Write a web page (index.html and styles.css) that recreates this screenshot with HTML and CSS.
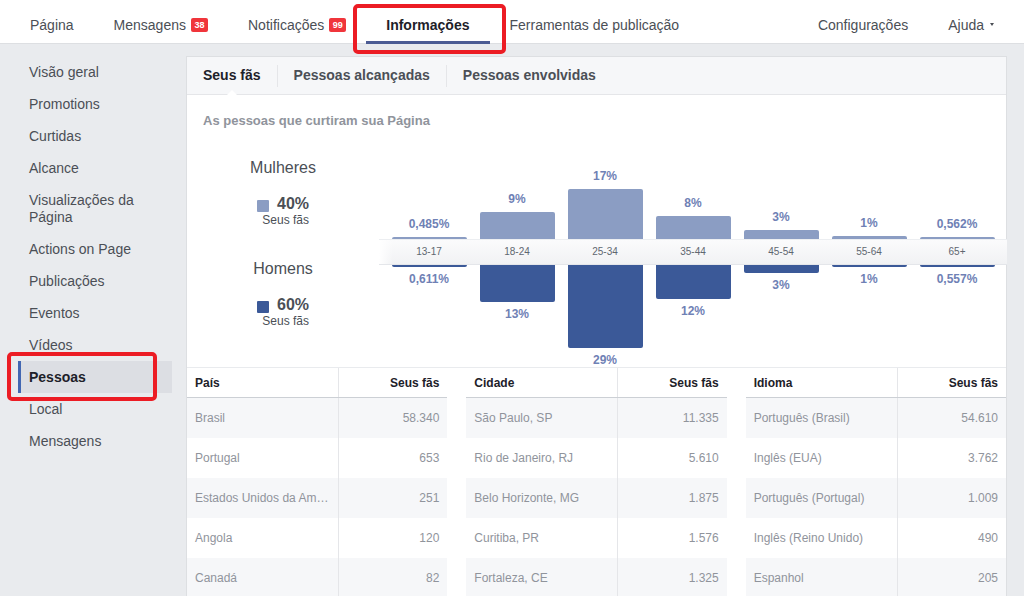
FILE: index.html
```html
<!DOCTYPE html>
<html lang="pt-BR">
<head>
<meta charset="utf-8">
<title>Informações – Pessoas</title>
<link rel="stylesheet" href="styles.css">
</head>
<body>
<header class="topnav">
  <nav class="nav-group">
    <a class="nav-item">Página</a>
    <a class="nav-item">Mensagens<span class="badge">38</span></a>
    <a class="nav-item">Notificações<span class="badge">99</span></a>
    <a class="nav-item active">Informações</a>
    <a class="nav-item">Ferramentas de publicação</a>
  </nav>
  <nav class="nav-group">
    <a class="nav-item">Configurações</a>
    <a class="nav-item">Ajuda<span class="caret"></span></a>
  </nav>
  <div class="annot annot-nav"></div>
</header>

<div class="layout">
  <aside class="sidebar">
    <div class="side-item">Visão geral</div>
    <div class="side-item">Promotions</div>
    <div class="side-item">Curtidas</div>
    <div class="side-item">Alcance</div>
    <div class="side-item">Visualizações da<br>Página</div>
    <div class="side-item">Actions on Page</div>
    <div class="side-item">Publicações</div>
    <div class="side-item">Eventos</div>
    <div class="side-item">Vídeos</div>
    <div class="side-item active">Pessoas</div>
    <div class="side-item">Local</div>
    <div class="side-item">Mensagens</div>
    <div class="annot annot-side"></div>
  </aside>

  <main class="card">
    <div class="tabs">
      <div class="tab active">Seus fãs</div>
      <div class="tab-sep"></div>
      <div class="tab">Pessoas alcançadas</div>
      <div class="tab-sep"></div>
      <div class="tab">Pessoas envolvidas</div>
    </div>

    <section class="chart-section">
      <h2 class="chart-title">As pessoas que curtiram sua Página</h2>
      <div class="chart">
        <div class="legend">
          <div class="legend-title">Mulheres</div>
          <div class="legend-item">
            <div class="legend-row"><span class="swatch swatch-f"></span><span class="legend-value">40%</span></div>
            <div class="legend-sub">Seus fãs</div>
          </div>
          <div class="legend-title legend-title-2">Homens</div>
          <div class="legend-item">
            <div class="legend-row"><span class="swatch swatch-m"></span><span class="legend-value">60%</span></div>
            <div class="legend-sub">Seus fãs</div>
          </div>
        </div>
        <div class="plot">
          <div class="plot-top">
            <div class="col"><span class="pct">0,485%</span><div class="bar bar-f" style="height:2px"></div></div>
            <div class="col"><span class="pct">9%</span><div class="bar bar-f" style="height:27px"></div></div>
            <div class="col"><span class="pct">17%</span><div class="bar bar-f" style="height:50px"></div></div>
            <div class="col"><span class="pct">8%</span><div class="bar bar-f" style="height:23px"></div></div>
            <div class="col"><span class="pct">3%</span><div class="bar bar-f" style="height:9px"></div></div>
            <div class="col"><span class="pct">1%</span><div class="bar bar-f" style="height:3px"></div></div>
            <div class="col"><span class="pct">0,562%</span><div class="bar bar-f" style="height:2px"></div></div>
          </div>
          <div class="band">
            <span class="band-label">13-17</span>
            <span class="band-label">18-24</span>
            <span class="band-label">25-34</span>
            <span class="band-label">35-44</span>
            <span class="band-label">45-54</span>
            <span class="band-label">55-64</span>
            <span class="band-label">65+</span>
          </div>
          <div class="plot-bottom">
            <div class="col"><div class="bar bar-m" style="height:2px"></div><span class="pct">0,611%</span></div>
            <div class="col"><div class="bar bar-m" style="height:37px"></div><span class="pct">13%</span></div>
            <div class="col"><div class="bar bar-m" style="height:83px"></div><span class="pct">29%</span></div>
            <div class="col"><div class="bar bar-m" style="height:34px"></div><span class="pct">12%</span></div>
            <div class="col"><div class="bar bar-m" style="height:8px"></div><span class="pct">3%</span></div>
            <div class="col"><div class="bar bar-m" style="height:2px"></div><span class="pct">1%</span></div>
            <div class="col"><div class="bar bar-m" style="height:2px"></div><span class="pct">0,557%</span></div>
          </div>
        </div>
      </div>
    </section>

    <section class="tables">
      <div class="table-wrap">
        <table class="data-table">
          <thead><tr><th class="name">País</th><th class="num">Seus fãs</th></tr></thead>
          <tbody>
            <tr><td class="name">Brasil</td><td class="num">58.340</td></tr>
            <tr><td class="name">Portugal</td><td class="num">653</td></tr>
            <tr><td class="name">Estados Unidos da América</td><td class="num">251</td></tr>
            <tr><td class="name">Angola</td><td class="num">120</td></tr>
            <tr><td class="name">Canadá</td><td class="num">82</td></tr>
          </tbody>
        </table>
      </div>
      <div class="table-wrap">
        <table class="data-table">
          <thead><tr><th class="name">Cidade</th><th class="num">Seus fãs</th></tr></thead>
          <tbody>
            <tr><td class="name">São Paulo, SP</td><td class="num">11.335</td></tr>
            <tr><td class="name">Rio de Janeiro, RJ</td><td class="num">5.610</td></tr>
            <tr><td class="name">Belo Horizonte, MG</td><td class="num">1.875</td></tr>
            <tr><td class="name">Curitiba, PR</td><td class="num">1.576</td></tr>
            <tr><td class="name">Fortaleza, CE</td><td class="num">1.325</td></tr>
          </tbody>
        </table>
      </div>
      <div class="table-wrap">
        <table class="data-table">
          <thead><tr><th class="name">Idioma</th><th class="num">Seus fãs</th></tr></thead>
          <tbody>
            <tr><td class="name">Português (Brasil)</td><td class="num">54.610</td></tr>
            <tr><td class="name">Inglês (EUA)</td><td class="num">3.762</td></tr>
            <tr><td class="name">Português (Portugal)</td><td class="num">1.009</td></tr>
            <tr><td class="name">Inglês (Reino Unido)</td><td class="num">490</td></tr>
            <tr><td class="name">Espanhol</td><td class="num">205</td></tr>
          </tbody>
        </table>
      </div>
    </section>
  </main>
</div>
</body>
</html>
```

FILE: styles.css
```css
html, body {
  margin: 0;
  padding: 0;
}
body {
  background: #e9ebee;
  font-family: "Liberation Sans", Arial, Helvetica, sans-serif;
  color: #4b4f56;
  height: 596px;
  overflow: hidden;
}

/* ---------- top navigation ---------- */
.topnav {
  position: relative;
  display: flex;
  justify-content: space-between;
  height: 43px;
  padding: 0 10px;
  background: #fff;
  border-bottom: 1px solid #dddfe2;
}
.nav-group {
  display: flex;
  margin-bottom: -1px;
}
.nav-item {
  display: flex;
  align-items: center;
  padding: 5px 20px 0;
  font-size: 14px;
  color: #4b4f56;
  text-decoration: none;
  white-space: nowrap;
}
.nav-item.active {
  font-weight: bold;
  color: #1d2129;
  box-shadow: inset 0 -3px 0 #4b5b93;
}
.badge {
  display: inline-block;
  box-sizing: border-box;
  min-width: 17px;
  height: 14px;
  margin-left: 5px;
  padding: 0 3px;
  border-radius: 2px;
  background: #f0353b;
  color: #fff;
  font-size: 9px;
  font-weight: bold;
  line-height: 14px;
  text-align: center;
}
.caret {
  width: 0;
  height: 0;
  margin-left: 6px;
  border-left: 2px solid transparent;
  border-right: 2px solid transparent;
  border-top: 3px solid #4b4f56;
}

/* ---------- annotation boxes ---------- */
.annot {
  position: absolute;
  border: 4px solid #ec1c24;
  border-radius: 5px;
  z-index: 5;
  pointer-events: none;
}
.annot-nav {
  left: 353px;
  top: 4px;
  width: 145px;
  height: 42px;
}
.annot-side {
  left: -11px;
  top: 296px;
  width: 142px;
  height: 41px;
}

/* ---------- layout ---------- */
.layout {
  display: flex;
  align-items: flex-start;
  gap: 14px;
  padding: 12px 0 0 18px;
}
.sidebar {
  position: relative;
  flex: none;
  width: 154px;
}
.side-item {
  padding: 8px 11px 7px;
  font-size: 14px;
  line-height: 17px;
  color: #4b4f56;
}
.side-item.active {
  background: #dcdee3;
  font-weight: bold;
  color: #1d2129;
  box-shadow: inset 3px 0 0 #4267b2;
}

/* ---------- card ---------- */
.card {
  flex: none;
  width: 821px;
  box-sizing: border-box;
  background: #fff;
  border: 1px solid #dddfe2;
  border-bottom: none;
}
.tabs {
  display: flex;
  align-items: center;
  height: 37px;
  background: #f6f7f9;
  border-bottom: 1px solid #e5e6e9;
}
.tab {
  position: relative;
  padding: 0 16px;
  font-size: 14px;
  font-weight: bold;
  line-height: 37px;
  color: #4b4f56;
  white-space: nowrap;
}
.tab.active {
  color: #1d2129;
}
.tab.active::after {
  content: "";
  position: absolute;
  left: 50%;
  bottom: -1px;
  margin-left: -5px;
  border-left: 5px solid transparent;
  border-right: 5px solid transparent;
  border-bottom: 5px solid #fff;
}
.tab-sep {
  width: 1px;
  height: 22px;
  background: #e5e6e9;
}

/* ---------- chart ---------- */
.chart-section {
  padding: 18px 0 0 16px;
  border-bottom: 1px solid #e9ebee;
}
.chart-title {
  margin: 0;
  font-size: 13px;
  font-weight: bold;
  line-height: 16px;
  color: #90949c;
}
.chart {
  display: flex;
  margin-top: 30px;
}
.legend {
  flex: none;
  width: 160px;
  text-align: center;
  color: #4b4f56;
}
.legend-title {
  font-size: 16px;
  line-height: 18px;
}
.legend-title-2 {
  margin-top: 32px;
}
.legend-item {
  display: inline-block;
  margin-top: 18px;
  text-align: right;
}
.legend-row {
  display: flex;
  align-items: center;
}
.swatch {
  width: 12px;
  height: 12px;
  margin: 3px 8px 0 0;
  border-radius: 1px;
}
.swatch-f { background: #8b9dc3; }
.swatch-m { background: #3b5998; }
.legend-value {
  font-size: 16px;
  font-weight: bold;
  line-height: 18px;
}
.legend-sub {
  font-size: 12px;
  line-height: 14px;
}

.plot {
  flex: 1;
  margin-left: 16px;
}
.plot-top,
.plot-bottom {
  display: flex;
  padding: 0 6px;
}
.plot-top { height: 80px; }
.plot-bottom { height: 102px; }
.col {
  display: flex;
  flex-direction: column;
  align-items: center;
  width: 88px;
}
.plot-top .col { justify-content: flex-end; }
.plot-bottom .col { justify-content: flex-start; }
.bar { width: 75px; }
.bar-f {
  background: #8b9dc3;
  border-radius: 2px 2px 0 0;
}
.bar-m {
  background: #3b5998;
  border-radius: 0 0 2px 2px;
}
.pct {
  font-size: 12px;
  font-weight: bold;
  line-height: 14px;
  color: #6f81b5;
}
.plot-top .pct { margin-bottom: 6px; }
.plot-bottom .pct { margin-top: 5px; }
.band {
  display: flex;
  box-sizing: border-box;
  height: 26px;
  padding: 0 6px;
  background:
    linear-gradient(to right, rgba(255,255,255,1) 0, rgba(255,255,255,0) 14px),
    linear-gradient(to bottom, #fbfbfc, #f1f2f4);
  border-top: 1px solid #eceef1;
  border-bottom: 1px solid #e4e6ea;
}
.band-label {
  width: 88px;
  text-align: center;
  font-size: 10px;
  line-height: 24px;
  color: #606770;
}

/* ---------- tables ---------- */
.tables {
  display: flex;
  gap: 19px;
}
.table-wrap {
  flex: 1;
  min-width: 0;
}
.data-table {
  width: 100%;
  border-collapse: collapse;
  table-layout: fixed;
  font-size: 12px;
}
.data-table th {
  height: 29px;
  padding: 0 8px;
  font-weight: bold;
  color: #1d2129;
  text-align: left;
  border-bottom: 1px solid #ccd0d5;
}
.data-table th.name {
  width: 135px;
}
.data-table td {
  height: 40px;
  padding: 0 8px;
  color: #90949c;
}
.data-table .name {
  border-right: 1px solid #e5e6e9;
  white-space: nowrap;
  overflow: hidden;
  text-overflow: ellipsis;
}
.data-table .num {
  text-align: right;
}
.data-table tbody tr:nth-child(odd) {
  background: #f6f7f9;
}
```
